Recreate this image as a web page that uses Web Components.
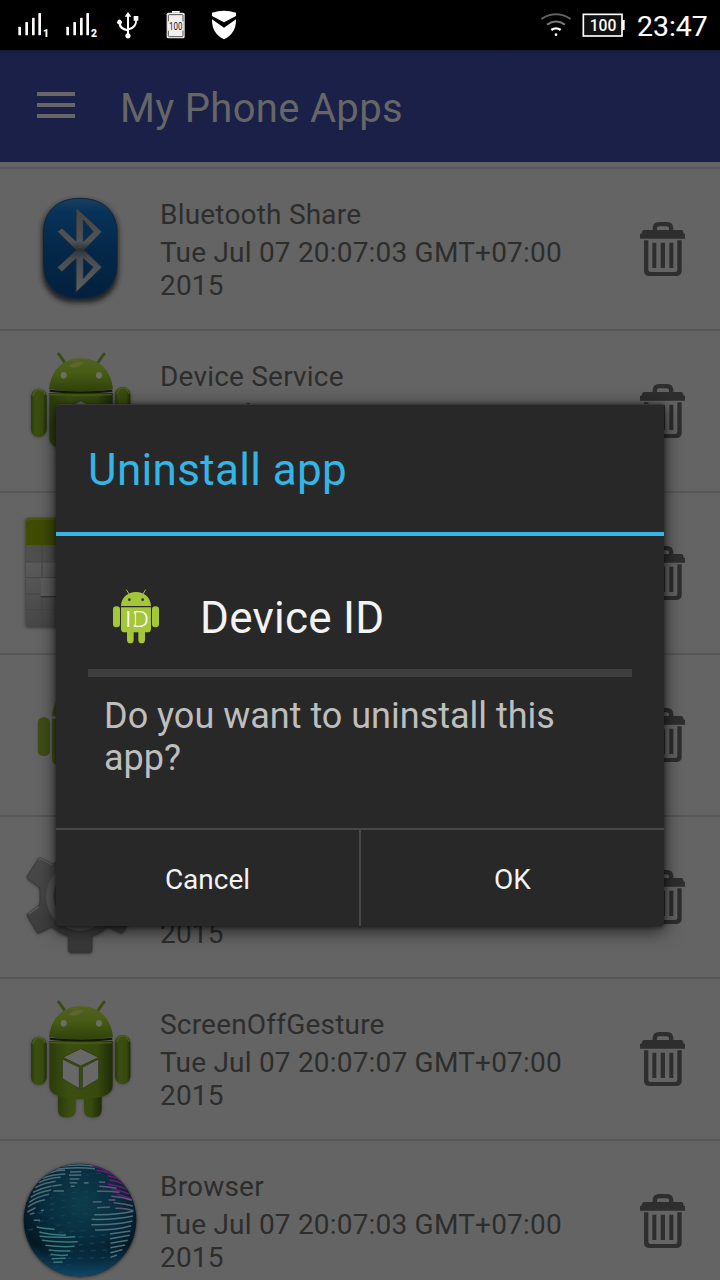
<!DOCTYPE html>
<html lang="en">
<head>
<meta charset="utf-8">
<title>My Phone Apps</title>
<style>
html,body{margin:0;padding:0;background:#646464}
body{width:720px;height:1280px;overflow:hidden;font-family:Roboto,"Noto Sans",sans-serif}
</style>
</head>
<body>
<phone-screen>
  <status-bar slot="status" time="23:47" level="100"></status-bar>
  <app-header slot="header">My Phone Apps</app-header>
  <app-row icon="bluetooth" name="Bluetooth Share" date="Tue Jul 07 20:07:03 GMT+07:00" year="2015"></app-row>
  <app-row icon="droid" name="Device Service" date="Tue Jul 07 20:07:03 GMT+07:00"></app-row>
  <app-row icon="calendar"></app-row>
  <app-row icon="flatdroid"></app-row>
  <app-row icon="gear" year="2015"></app-row>
  <app-row icon="droid" name="ScreenOffGesture" date="Tue Jul 07 20:07:07 GMT+07:00" year="2015"></app-row>
  <app-row icon="globe" name="Browser" date="Tue Jul 07 20:07:03 GMT+07:00" year="2015"></app-row>
  <confirm-dialog slot="dialog">
    <span slot="title">Uninstall app</span>
    <span slot="app">Device ID</span>
    <span slot="message">Do you want to uninstall this app?</span>
    <dialog-button slot="actions">Cancel</dialog-button>
    <dialog-button slot="actions">OK</dialog-button>
  </confirm-dialog>
</phone-screen>
<script>
const define = (name, render) => customElements.define(name, class extends HTMLElement {
  constructor() {
    super();
    this.attachShadow({ mode: 'open' });
  }
  connectedCallback() {
    this.shadowRoot.innerHTML = render(this);
  }
});

const gearPath = 'M85 56Q88 52 93 54L130 73Q151 52 178 43V-5H243V43Q269 52 290 73L327 54Q332 52 335 56L368 106Q371 111 367 115L335 138Q330 142 330 150V185Q330 192 335 196L365 219Q369 223 367 228L340 275Q337 280 331 278L295 260Q272 280 246 288V331Q246 338 239 338H182Q175 338 175 331V288Q149 280 125 260L89 278Q84 280 80 276L52 229Q50 224 54 220L85 197Q90 193 90 186V150Q90 143 85 139L53 116Q49 112 52 107Z';

const icons = {
  bluetooth: `<svg viewBox="-60 -33 480 480" width="160" height="160">
    <defs><linearGradient id="b" x2="0" y2="1"><stop offset="0" stop-color="#1b405f"/><stop offset=".13" stop-color="#08325a"/><stop offset=".5" stop-color="#04284a"/><stop offset="1" stop-color="#03203d"/></linearGradient>
    <linearGradient id="s" x2="0" y2="1"><stop offset="0" stop-color="#404447"/><stop offset=".4" stop-color="#515457"/><stop offset=".5" stop-color="#2c3136"/><stop offset=".6" stop-color="#484c50"/><stop offset="1" stop-color="#5d6063"/></linearGradient>
    <filter id="f" x="-30%" y="-30%" width="160%" height="160%"><feGaussianBlur stdDeviation="8"/></filter></defs>
    <rect x="66" y="62" width="229" height="306" rx="92" fill="#222" filter="url(#f)"/>
    <path d="M180 55C247 55 291 92 291 159V252C291 319 247 356 180 356S71 319 71 252V159C71 92 114 55 180 55Z" fill="url(#b)" stroke="#0b2740" stroke-width="3"/>
    <path fill-rule="evenodd" fill="url(#s)" stroke="#1c2c3c" stroke-width="3" d="M168 82L246 155L193 210L246 262L168 337V236L126 275L112 262L168 210L112 155L126 144L168 183ZM190 120V184L219 155ZM190 236V295L219 262Z"/></svg>`,
  droid: `<svg viewBox="-45 -18 480 480" width="160" height="160">
    <defs><linearGradient id="a"><stop offset="0" stop-color="#2c3b0c"/><stop offset=".3" stop-color="#3c4f10"/><stop offset=".75" stop-color="#384a0e"/><stop offset="1" stop-color="#1f2b07"/></linearGradient>
    <linearGradient id="v" x2="0" y2="1"><stop offset="0" stop-color="#536221"/><stop offset=".45" stop-color="#475b14"/><stop offset="1" stop-color="#31410c"/></linearGradient>
    <filter id="f" x="-20%" y="-20%" width="140%" height="140%"><feGaussianBlur stdDeviation="4"/></filter></defs>
    <g filter="url(#f)" fill="#333" opacity=".6"><rect x="47" y="157" width="49" height="145" rx="24"/><rect x="299" y="154" width="48" height="145" rx="24"/><path d="M103 168H294V310Q288 345 198 345T103 310Z"/><rect x="128" y="320" width="54" height="79" rx="22"/><rect x="207" y="320" width="54" height="79" rx="22"/></g>
    <path d="M131 51L151 79M267 51L247 79" stroke="#3b4b16" stroke-width="9" stroke-linecap="round"/>
    <path d="M129 320H182V374Q182 397 155 397T129 374ZM207 320H260V374Q260 397 233 397T207 374Z" fill="url(#a)"/>
    <path d="M103 168H293V306Q288 342 198 342T103 306Z" fill="url(#a)"/>
    <path d="M106 173Q198 178 290 173" fill="none" stroke="#4b5e18" stroke-width="4"/>
    <rect x="48" y="155" width="47" height="145" rx="23" fill="url(#a)"/><rect x="300" y="150" width="46" height="147" rx="23" fill="url(#a)"/>
    <path d="M54 177Q57 158 71 158T90 173M306 172Q309 153 323 153T342 170" fill="none" stroke="#4b5c1c" stroke-width="5"/>
    <path d="M102 157C107 98 147 63 198 63S289 98 294 157Q198 170 102 157Z" fill="url(#v)"/>
    <path d="M104 161Q198 172 292 161" fill="none" stroke="#141b05" stroke-width="6"/>
    <ellipse cx="183" cy="83" rx="21" ry="7" transform="rotate(-16 183 83)" fill="#5f662c"/>
    <ellipse cx="146" cy="115" rx="9" ry="10" fill="#6c6d68"/><ellipse cx="252" cy="115" rx="9" ry="10" fill="#6c6d68"/>
    <g fill="#686868" stroke="#27340b" stroke-width="2"><path d="M197 191L251 217L197 243L144 217Z"/><path d="M142 222L193 247V311L142 281Z"/><path d="M202 247L251 222V282L202 311Z"/></g></svg>`,
  calendar: `<svg viewBox="-30 -21 480 480" width="160" height="160">
    <defs><linearGradient id="g" x2="0" y2="1"><stop offset="0" stop-color="#4c4c4c"/><stop offset=".38" stop-color="#505050"/><stop offset=".4" stop-color="#5b5b5b"/><stop offset="1" stop-color="#464646"/></linearGradient>
    <filter id="f" x="-20%" y="-20%" width="140%" height="140%"><feGaussianBlur stdDeviation="4"/></filter></defs>
    <rect x="45" y="55" width="330" height="329" rx="10" fill="#333" opacity=".7" filter="url(#f)"/>
    <rect x="48" y="60" width="324" height="320" rx="10" fill="url(#g)"/>
    <path d="M48 135V66Q48 53 60 53H360Q372 53 372 66V135Z" fill="#404c02"/><path d="M52 65Q53 57 62 57H360" fill="none" stroke="#4b5719" stroke-width="4"/>
    <path d="M48 186H372M48 233H372M48 282H372M48 329H372M96 135V380" stroke="#464646" stroke-width="3"/>
    <path d="M92 234H150V290H92Z" fill="#5c5c5c"/><path d="M92 290H150" stroke="#333" stroke-width="4"/></svg>`,
  flatdroid: `<svg viewBox="-30 465 480 480" width="160" height="160" fill="#404e18"><rect x="83" y="652" width="37" height="116" rx="16"/><path d="M126 648C130 595 165 570 205 570S280 595 284 648ZM126 657H284V778Q284 795 265 795H145Q126 795 126 778Z"/></svg>`,
  gear: `<svg viewBox="-30 -69 480 480" width="160" height="160">
    <defs><linearGradient id="g" x2="0" y2="1"><stop offset="0" stop-color="#4b4b4b"/><stop offset=".5" stop-color="#454545"/><stop offset="1" stop-color="#373737"/></linearGradient>
    <filter id="f" x="-20%" y="-20%" width="140%" height="140%"><feGaussianBlur stdDeviation="5"/></filter></defs>
    <path transform="translate(0 3)" d="${gearPath}" fill="#333" filter="url(#f)"/>
    <path d="${gearPath}" fill="url(#g)" stroke="#333" stroke-width="2"/>
    <path d="M86 58L93 56L128 75M56 222L86 200" fill="none" stroke="#606060" stroke-width="4"/>
    <circle cx="210" cy="170" r="102" fill="#555"/><circle cx="210" cy="167" r="80" fill="#3c3c3c"/></svg>`,
  globe: `<svg viewBox="-45 -27 480 480" width="160" height="160">
    <defs><radialGradient id="r" cx=".52" cy=".35" r=".65"><stop offset="0" stop-color="#0d3d4b"/><stop offset=".5" stop-color="#082d3e"/><stop offset=".85" stop-color="#051824"/><stop offset="1" stop-color="#082737"/></radialGradient>
    <linearGradient id="l" x2="0" y2="1"><stop offset=".72" stop-color="#0b3b57" stop-opacity="0"/><stop offset="1" stop-color="#0d4664"/></linearGradient>
    <clipPath id="c"><circle cx="195" cy="210" r="168"/></clipPath><filter id="f" x="-20%" y="-20%" width="140%" height="140%"><feGaussianBlur stdDeviation="4"/></filter></defs>
    <circle cx="195" cy="212" r="171" fill="#333" filter="url(#f)"/><circle cx="195" cy="210" r="169" fill="url(#r)"/><circle cx="195" cy="210" r="169" fill="url(#l)"/>
    <g clip-path="url(#c)" fill="none" stroke-width="4.5">
    <g stroke="#123f57" stroke-width="4"><path d="M105 145Q190 115 245 130M105 164Q190 132 240 150M70 190Q190 155 230 172M70 216Q190 180 225 194M90 237Q180 208 220 218M130 247L225 240M190 261Q260 258 275 252M40 240L80 232M190 285L275 275M70 330L110 315M160 305L275 300M155 325L275 323M120 350L180 342M210 77L260 69M205 100L240 96" stroke-dasharray="14 20"/></g>
    <g stroke="#4b6c77"><path d="M142 49Q190 41 238 48M118 58Q180 49 240 56M95 72Q115 62 150 61M82 85Q112 73 151 72M72 98Q98 84 137 82M61 113Q83 100 122 94M54 127Q80 114 110 108M47 142Q72 126 108 120M43 157Q66 140 102 133M39 171Q62 153 90 149M37 186L62 173M45 193L58 189M112 108L140 104M115 123L147 123M78 182L87 180M56 211L75 211M165 66L199 65M162 76L199 75M164 87L193 87M164 98L187 98M167 109L179 109M207 99L221 98"/></g>
    <g stroke="#3a787c"><path d="M65 231Q90 237 119 238M73 246Q110 256 153 255M74 259Q125 264 181 260M81 271Q130 278 188 275M91 286Q140 292 179 289M101 300Q138 305 166 302M107 313Q135 318 159 315M110 326L152 325M115 337L143 336"/></g>
    <g stroke="#6c1874"><path d="M235 48Q258 53 278 64M244 61Q276 65 300 77M277 77Q302 80 318 91M283 90Q310 94 327 103M279 103Q315 109 336 118M290 118Q321 123 342 132M305 133Q330 138 350 148"/></g>
    <g stroke="#5e587a"><path d="M252 96L270 97M253 109Q280 110 305 115M246 124Q275 122 314 127M289 139Q322 141 351 151M233 156L260 155M281 150L301 150M296 158Q328 160 354 168M246 173L285 171M301 175Q335 174 356 183"/></g>
    <g stroke="#4c6f7d"><path d="M238 194Q300 196 354 184M230 208Q300 210 354 198M229 224Q300 226 352 213M240 240Q300 241 348 227M285 252L346 243M285 266L344 256M286 280L338 271M286 293L330 285M286 308L322 299M286 322L306 315"/></g></g></svg>`,
};

define('phone-screen', () => `
  <style>:host{display:block;position:relative;width:720px;height:1280px;overflow:hidden;background:#646464}
  .list{margin-top:5px;border-top:2px solid #575757}
  .overlay{position:absolute;inset:404px 56px 354px}</style>
  <slot name="status"></slot><slot name="header"></slot>
  <div class="list"><slot></slot></div><div class="overlay"><slot name="dialog"></slot></div>`);

define('status-bar', el => `
  <style>:host{display:flex;height:50px;background:#000;color:#fff;width:720px}
  svg{display:block;flex:none}.left{display:flex;flex:1;padding-left:16px}.right{display:flex;padding-right:12px}
  .time{width:71px;margin-left:12px;font-size:28.4px;line-height:53px;white-space:nowrap;-webkit-text-stroke:.1px #fff}
  text{font-family:Roboto,sans-serif}</style>
  <div class="left">
  ${[1, 2].map(n => `<svg viewBox="48 0 144 150" width="48" height="50" fill="#fff"><rect x="55" y="80" width="8" height="26" rx="2"/><rect x="76" y="66" width="8" height="40" rx="2"/><rect x="96" y="53" width="8" height="53" rx="2"/><rect x="115" y="39" width="8" height="67" rx="2"/><text x="129" y="112" font-size="31" font-weight="900">${n}</text></svg>`).join('')}
  <svg viewBox="336 0 144 150" width="48" height="50" fill="#fff"><path d="M384 36L394 50H387V84Q405 79 406 62H401V48H415V62H411Q411 84 387 91V100A8 8 0 1 1 381 100V94Q358 89 356 73A7 7 0 1 1 363 72Q364 82 381 87V50H374Z"/></svg>
  <svg viewBox="480 0 120 150" width="40" height="50"><path d="M518 38V35H537V38" fill="#fff" stroke="#fff" stroke-width="4"/><rect x="500" y="38" width="54" height="77" rx="5" fill="#f4efee"/><rect x="505" y="44" width="44" height="66" rx="3" fill="none" stroke="#555" stroke-width="3"/><rect x="503" y="64" width="48" height="28" fill="#f4efee"/><text x="507" y="89" font-size="31" textLength="40" lengthAdjust="spacingAndGlyphs" fill="#222">${el.getAttribute('level')}</text></svg>
  <svg viewBox="600 0 144 150" width="48" height="50" fill="#fff"><path d="M636 38Q672 27 708 38V48L672 67L636 48ZM636 58L672 83L708 58Q709 101 672 118Q635 101 636 58Z"/></svg>
  </div><div class="right">
  <svg viewBox="27 0 117 150" width="39" height="50" fill="none" stroke="#606060" stroke-width="6"><path d="M34 57Q78 29 122 57"/><path d="M51 74Q78 55 105 74" stroke="#777"/><path d="M64 90Q78 80 92 90" stroke="#fff" stroke-width="7"/><circle cx="78" cy="104" r="4" fill="#fff" stroke="none"/></svg>
  <svg viewBox="144 0 141 150" width="47" height="50"><rect x="160" y="43" width="116" height="65" fill="#111" stroke="#fff" stroke-width="5"/><rect x="276" y="60" width="8" height="30" fill="#fff"/><text x="179" y="93" font-size="48" font-weight="500" textLength="80" lengthAdjust="spacingAndGlyphs" fill="#fff">${el.getAttribute('level')}</text></svg>
  <div class="time">${el.getAttribute('time')}</div></div>`);

define('app-header', () => `
  <style>:host{display:flex;align-items:center;box-sizing:border-box;height:112px;padding-left:37px;background:linear-gradient(#14193a,#1a2047 4px,#1a2047);color:#666;font-size:40px;letter-spacing:.32px}
  svg{display:block;margin:-2px 45px 0 0}span{padding-top:6px;line-height:48px}</style>
  <svg width="38" height="26" fill="#666"><path d="M0 0H38V4H0ZM0 11H38V15H0ZM0 22H38V26H0Z"/></svg><span><slot></slot></span>`);

define('trash-button', () => `
  <style>:host{display:block;width:45px;height:54px}svg{display:block}</style>
  <svg viewBox="60 66 135 162" width="45" height="54" fill="#2e2e2e"><path d="M98 92V84Q99 66 117 66H141Q159 66 160 84V92H147V84Q147 79 140 79H118Q111 79 111 84V92ZM72 90H184Q190 90 191 101H195V116H60V101H65Q66 90 72 90ZM97 128H109V204H97ZM122 128H135V204H122ZM148 128H160V204H148ZM72 121H85V210Q85 216 92 216H165Q172 216 172 210V121H185V214Q184 227 171 228H86Q73 227 72 214Z"/></svg>`);

define('app-row', el => `
  <style>:host{display:flex;align-items:center;box-sizing:border-box;height:162px;border-bottom:2px solid #575757;padding-right:35px;color:#2d2d2d;font-size:28px;line-height:33px}
  svg{display:block}.icon{width:160px;height:160px}.text{width:420px;height:104px;margin-right:auto;padding-top:2px}
  .text div{height:33px;letter-spacing:.2px}.text .name{margin-bottom:5px;letter-spacing:.2px}</style>
  <div class="icon">${icons[el.getAttribute('icon')]}</div>
  <div class="text"><div class="name">${el.getAttribute('name') || ''}</div><div>${el.getAttribute('date') || ''}</div><div>${el.getAttribute('year') || ''}</div></div>
  <trash-button></trash-button>`);

define('dialog-button', () => `
  <style>:host{display:flex;flex:1;align-items:center;justify-content:center;font-size:28px;color:#f3f3f3;padding-top:3px}
  :host(:not(:last-child)){border-right:2px solid #484848}</style><slot></slot>`);

define('confirm-dialog', () => `
  <style>:host{display:flex;flex-direction:column;box-sizing:border-box;height:522px;background:#282828;border-radius:4px;box-shadow:0 4px 18px 1px rgba(0,0,0,.65),0 1px 4px rgba(0,0,0,.5);border-top:1px solid #383838}
  .title{box-sizing:border-box;height:127px;padding:39px 32px 0;line-height:52px;font-size:44px;letter-spacing:.35px;color:#33b5e5}
  .bar{height:4px;background:#33b5e5}
  .app{display:flex;height:133px;margin:0 32px;border-bottom:8px solid #3e3e3e;font-size:44px;line-height:52px;color:#f3f3f3}
  .app svg{display:block;margin:51px 0 0 22px}.app span{margin:56px 0 0 36px;letter-spacing:.25px}
  .msg{height:151px;padding:18px 48px 0;box-sizing:border-box;font-size:36px;line-height:42px;color:#bebebe}
  .actions{display:flex;flex:1;border-top:2px solid #484848}</style>
  <div class="title"><slot name="title"></slot></div><div class="bar"></div>
  <div class="app"><svg viewBox="90 51 162 180" width="54" height="60" fill="#a4c639"><path d="M139 59L147 72M197 59L189 72" stroke="#a4c639" stroke-width="3"/><path d="M123 108C124 82 143 66 168 66S212 82 213 108ZM123 112H213V176Q213 187 202 187H195V209A9 10 0 0 1 175 209V187H161V209A9 10 0 0 1 141 209V187H134Q123 187 123 176Z"/><rect x="99" y="109" width="21" height="63" rx="10"/><rect x="216" y="109" width="21" height="63" rx="10"/><circle cx="148" cy="89" r="4" fill="#333"/><circle cx="188" cy="89" r="4" fill="#333"/><text x="134" y="172" font-family="Roboto" font-size="68" font-weight="300" textLength="73" lengthAdjust="spacingAndGlyphs" fill="#fff">ID</text><path d="M160 131V164" stroke="#a4c639" stroke-width="9"/></svg><span><slot name="app"></slot></span></div>
  <div class="msg"><slot name="message"></slot></div><div class="actions"><slot name="actions"></slot></div>`);
</script>
</body>
</html>
